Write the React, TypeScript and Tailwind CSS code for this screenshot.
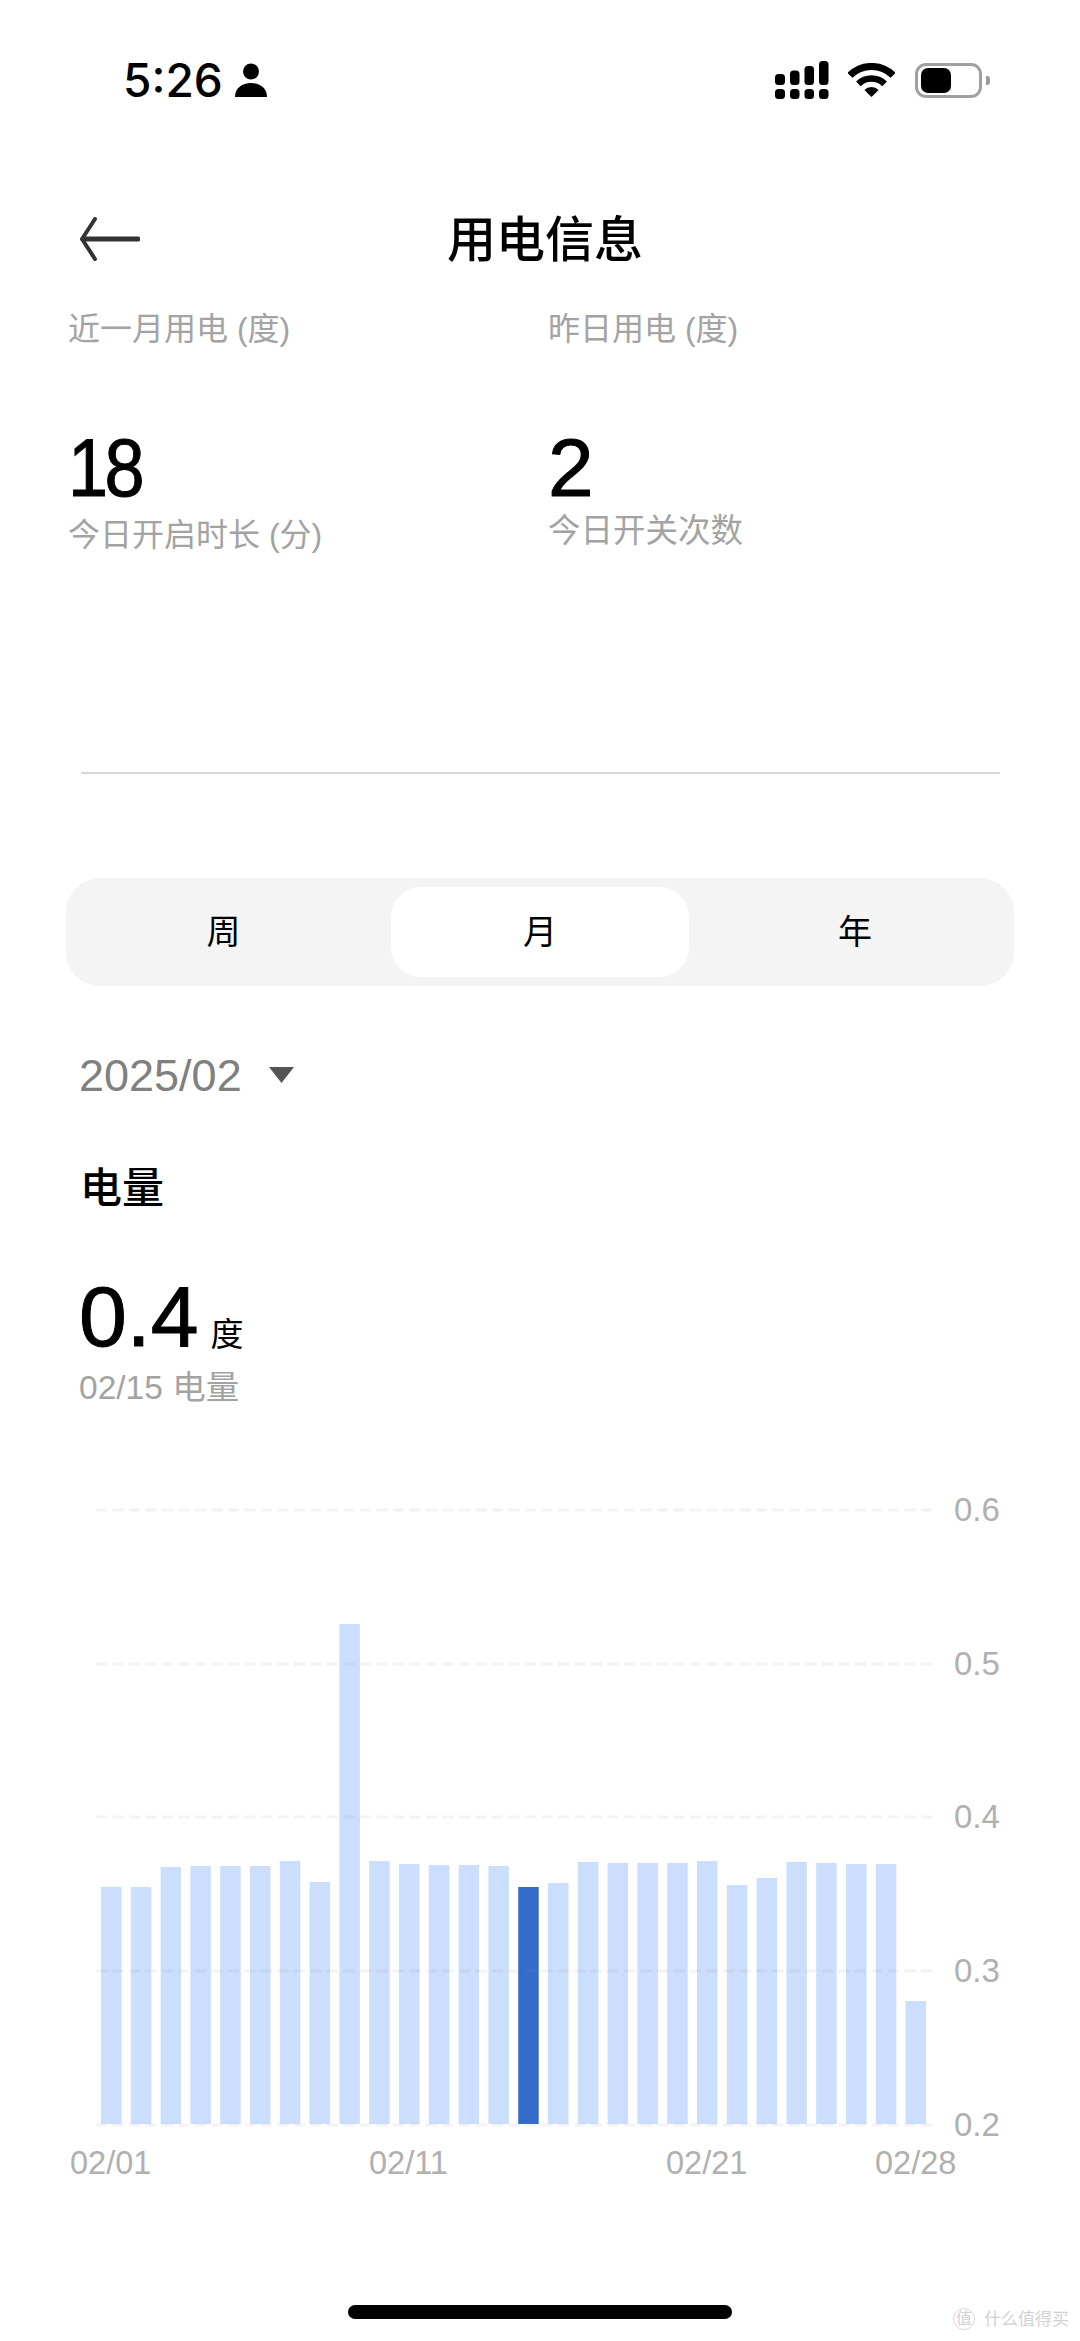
const font = "[font-family:'Liberation_Sans','Noto_Sans_CJK_SC',sans-serif]";

// top edge of each bar in page px, 02/01 to 02/28
const barTops = [
  1887, 1887, 1867, 1866, 1866, 1866, 1861, 1882, 1624, 1861, 1864, 1865, 1865, 1866,
  1887, 1883, 1862, 1863, 1863, 1863, 1861, 1885, 1878, 1862, 1863, 1864, 1864, 2001,
];
const chartTop = 1480;
const gridLines = [
  { y: 1510, label: "0.6" },
  { y: 1664, label: "0.5" },
  { y: 1817, label: "0.4" },
  { y: 1971, label: "0.3" },
  { y: 2125, label: "0.2" },
];
const xLabels = [
  { x: 70, label: "02/01" },
  { x: 369, label: "02/11" },
  { x: 666, label: "02/21" },
  { x: 875, label: "02/28" },
];

const StatusIcons = () => (
  <div className="flex items-center">
    <svg width="54" height="38" viewBox="0 0 54 38" fill="#000">
      <rect x="0" y="13" width="10" height="11" rx="3.5" />
      <rect x="15" y="9.5" width="9.5" height="14.5" rx="3.5" />
      <rect x="29.5" y="5" width="9.5" height="19" rx="3.5" />
      <rect x="44" y="0" width="9.5" height="24" rx="3.5" />
      <rect x="0" y="28" width="10" height="10" rx="3.5" />
      <rect x="15" y="28" width="9.5" height="10" rx="3.5" />
      <rect x="29.5" y="28" width="9.5" height="10" rx="3.5" />
      <rect x="44" y="28" width="9.5" height="10" rx="3.5" />
    </svg>
    <svg className="ml-[19px]" width="47" height="34" viewBox="0 0 47 34">
      <path d="M1.9 12.4A30.5 30.5 0 0 1 45.1 12.4" fill="none" stroke="#000" strokeWidth="7" />
      <path d="M10.4 20.9A18.5 18.5 0 0 1 36.6 20.9" fill="none" stroke="#000" strokeWidth="6.5" />
      <path d="M23.5 34L16.4 26.9A10 10 0 0 1 30.6 26.9Z" fill="#000" />
    </svg>
    <div className="ml-[20px] flex h-[35px] w-[67px] items-center rounded-[11px] border-[3px] border-[#a0a0a0] pl-[3px]">
      <div className="h-[25px] w-[30px] rounded-[7px] bg-black" />
    </div>
    <div className="ml-[4px] h-[9px] w-[4px] rounded-r-[3px] bg-[#999]" />
  </div>
);

const Chart = () => (
  <svg className="mt-[72px] block" width="1080" height="700" viewBox="0 0 1080 700">
    {barTops.map((top, i) => (
      <rect
        key={i}
        x={101 + i * 29.8}
        y={top - chartTop}
        width={20.5}
        height={2124 - top}
        fill={i === 14 ? "#356ccb" : "#cbdefd"}
      />
    ))}
    {gridLines.map((line) => (
      <g key={line.label}>
        <line
          x1="96"
          x2="932"
          y1={line.y - chartTop}
          y2={line.y - chartTop}
          stroke="#8a8a8a"
          strokeOpacity="0.1"
          strokeWidth="3"
          strokeDasharray="11 5.5"
        />
        <text x="954" y={line.y - chartTop + 11} fontSize="33" fill="#b0b0b0" fontFamily="'Liberation Sans', sans-serif">
          {line.label}
        </text>
      </g>
    ))}
    {xLabels.map((item) => (
      <text key={item.label} x={item.x} y="694" fontSize="32.5" fill="#b0b0b0" fontFamily="'Liberation Sans', sans-serif">
        {item.label}
      </text>
    ))}
  </svg>
);

export default function App() {
  return (
    <div className={`relative h-[2341px] w-[1080px] overflow-hidden bg-white text-black ${font}`}>
      <div className="flex h-[160px] items-center justify-between pl-[123px] pr-[90px]">
        <div className="flex items-center">
          <span className="text-[46px] font-medium leading-none [font-family:Inter,sans-serif]">5:26</span>
          <svg className="ml-[12px]" width="32" height="34" viewBox="0 0 32 34" fill="#000">
            <circle cx="16" cy="8.5" r="8" />
            <path d="M0 34C0 25 7 20 16 20S32 25 32 34Z" />
          </svg>
        </div>
        <StatusIcons />
      </div>

      <div className="mt-[14px] flex h-[130px] items-center pl-[80px]">
        <svg width="60" height="44" viewBox="0 0 60 44" fill="none" stroke="#333" strokeWidth="4" strokeLinecap="round">
          <path d="M15 2L2 22L15 42" />
          <path d="M3 22H58" strokeWidth="5" />
        </svg>
        <h1 className="ml-[307px] mt-[3px] text-[49px] font-medium leading-none">用电信息</h1>
      </div>

      <div className="grid grid-cols-[480px_1fr] pl-[68px] pt-px text-[#a3a3a3]">
        <div>
          <div className="text-[32px] leading-[48px]">近一月用电 (度)</div>
          <div className="mt-[73px] h-[84px] origin-left scale-x-[0.88] text-[82px] leading-[84px] tracking-[-4px] text-black [-webkit-text-stroke:1px_black]">18</div>
          <div className="mt-px text-[32px] leading-[48px]">今日开启时长 (分)</div>
        </div>
        <div>
          <div className="text-[32px] leading-[48px]">昨日用电 (度)</div>
          <div className="mt-[73px] h-[84px] text-[82px] leading-[84px] text-black [-webkit-text-stroke:1px_black]">2</div>
          <div className="-mt-[3px] text-[32.5px] leading-[48px]">今日开关次数</div>
        </div>
      </div>

      <div className="ml-[81px] mt-[213px] h-[2px] w-[919px] bg-[#d8d8d8]" />

      <div className="ml-[66px] mt-[104px] flex h-[108px] w-[948px] items-center rounded-[34px] bg-[#f4f4f4] text-[34px]">
        <div className="w-[325px] pr-[10px] text-center">周</div>
        <div className="flex h-[90px] w-[298px] items-center justify-center rounded-[30px] bg-white">月</div>
        <div className="w-[325px] pl-[7px] text-center">年</div>
      </div>

      <div className="mt-[59px] flex h-[60px] items-center pl-[79px]">
        <span className="text-[45px] leading-none text-[#808080]">2025/02</span>
        <svg className="ml-[27px]" width="25" height="16" viewBox="0 0 25 16" fill="#555">
          <path d="M0 0H25L12.5 16Z" />
        </svg>
      </div>

      <div className="mt-[59px] pl-[80px] text-[42px] font-medium leading-[50px]">电量</div>

      <div className="mt-[60px] flex h-[84px] items-baseline pl-[79px]">
        <span className="text-[86px] leading-[84px] [-webkit-text-stroke:1px_black]">0.4</span>
        <span className="ml-[12px] text-[33px] leading-none">度</span>
      </div>

      <div className="mt-[10px] pl-[79px] text-[33.5px] leading-[40px] text-[#a3a3a3]">02/15 电量</div>

      <Chart />

      <div className="mx-auto mt-[125px] h-[14px] w-[384px] rounded-full bg-black" />

      <div className="absolute left-[953px] top-[2308px] flex items-center text-[#d2d2d2]">
        <div className="flex h-[22px] w-[22px] items-center justify-center rounded-full border border-[#d8d8d8] text-[16px] leading-none">值</div>
        <span className="ml-[9px] text-[17px] leading-none">什么值得买</span>
      </div>
    </div>
  );
}
